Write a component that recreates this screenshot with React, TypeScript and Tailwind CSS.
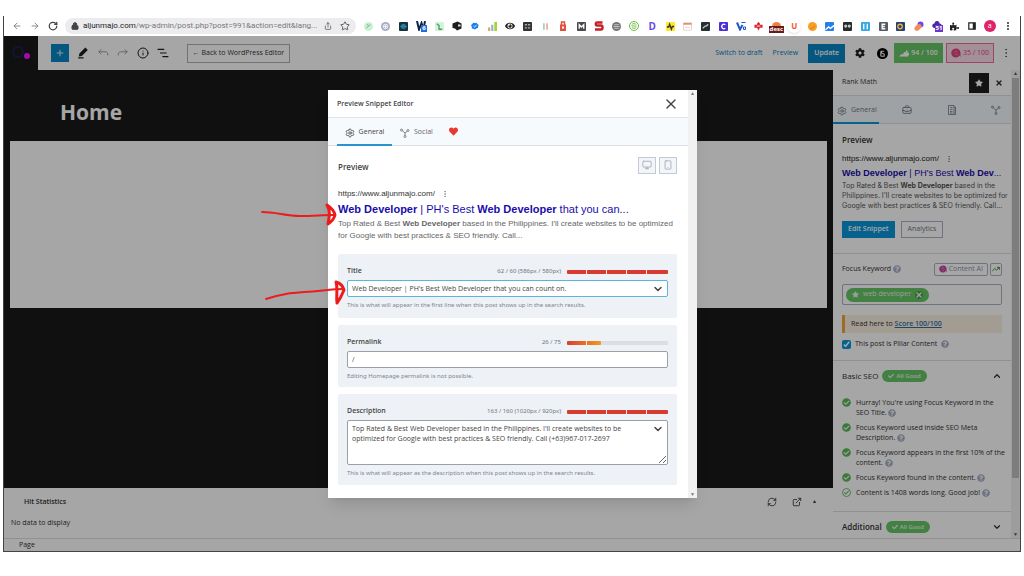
import type { ReactNode } from 'react';
import { ArrowLeft, ArrowRight, BriefcaseBusiness, ChevronDown, ChevronUp, ExternalLink, Info, Lock, Monitor, MoreVertical, Plus, RefreshCw, RotateCw, Settings, Share, Smartphone, Star, TrendingUp, X } from 'lucide-react';
import { FaCheck, FaCheckCircle, FaCog, FaEye, FaHeart, FaPuzzlePiece, FaQuestionCircle, FaRegCheckCircle, FaStar } from 'react-icons/fa';

const SocialIcon = ({ className }: { className: string }) => (
    <svg viewBox="0 0 20 20" fill="none" stroke="currentColor" strokeWidth="1.6" className={className}>
        <circle cx="3" cy="4" r="2" />
        <circle cx="16" cy="5" r="2" />
        <circle cx="10" cy="17" r="2" />
        <path d="M4.5 5.5 10 10v5M10 10l4.5-3.5" />
    </svg>
);

const SchemaIcon = ({ className }: { className: string }) => (
    <svg viewBox="0 0 20 20" fill="none" stroke="currentColor" strokeWidth="1.6" className={className}>
        <path d="M3 1h11v18H3ZM14 4h3v15h-3M6 5h5M6 9h5M6 13h5M6 16h5" />
    </svg>
);

const AiIcon = ({ className }: { className: string }) => (
    <svg viewBox="0 0 20 20" className={className}>
        <path d="M10 1a9 9 0 1 0 7 14l2 3V10a9 9 0 0 0-9-9Z" fill="currentColor" />
        <path d="M6 9c2-4 6-3 7-1M7 12c2 2 5 2 7 0M9 10h3" stroke="#fff" strokeOpacity=".5" strokeWidth="1.2" fill="none" />
    </svg>
);

const ScoreIcon = () => (
    <svg viewBox="0 0 20 14" fill="currentColor" className="h-[7px] w-2.5">
        <path d="M0 13 5 8l3 1 2-5 3 1 2-5 2 1v12Z" />
        <path d="M14 13V7l6-2v5l-3 3Z" />
    </svg>
);

const HistoryArrow = ({ className }: { className: string }) => (
    <svg viewBox="0 0 20 20" fill="none" stroke="currentColor" strokeWidth="1.6" className={className}>
        <path d="M7 4 3 8l4 4M3 8h11c3 0 4 2 4 6" />
    </svg>
);

const Help = () => <FaQuestionCircle className="inline-block size-2 text-[#a9b1c4]" />;

// Browser extension badges, in toolbar order
const Tile = ({ bg, fg = '#fff', children }: { bg: string; fg?: string; children?: ReactNode }) => (
    <svg viewBox="0 0 20 20" className="size-[9px]">
        <rect width="20" height="20" rx="2" fill={bg} />
        <g stroke={fg} strokeWidth="3" fill="none">{children}</g>
    </svg>
);

const Round = ({ bg, fg = '#fff', children }: { bg: string; fg?: string; children?: ReactNode }) => (
    <svg viewBox="0 0 20 20" className="size-[9px]">
        <circle cx="10" cy="10" r="10" fill={bg} />
        <g stroke={fg} strokeWidth="2" fill="none">{children}</g>
    </svg>
);

const Letter = ({ className, children }: { className: string; children: ReactNode }) => (
    <span className={`flex size-[10px] items-center justify-center font-bold ${className}`}>{children}</span>
);

const Badge = ({ className, children }: { className: string; children: ReactNode }) => (
    <span className={`absolute top-1 px-px text-[6px] leading-[7px] font-bold text-white ${className}`}>{children}</span>
);

const extensions: ReactNode[] = [
    <Round bg="#c9f0d2" fg="#5fb878"><path d="M5 14 14 5M7 5l3 4" /></Round>,
    <Round bg="#a5adc4"><circle cx="10" cy="10" r="5" /><path d="M10 7v6M7 10h6" /></Round>,
    <Tile bg="#16323f" fg="#2889ab"><circle cx="10" cy="10" r="4" /><path d="M3 10h14" /></Tile>,
    <><svg viewBox="0 0 20 20" className="size-[10px]"><path d="m2 0 4 17 5-13 4 13 3-17" fill="none" stroke="#17233f" strokeWidth="4" /></svg><Badge className="left-1.5 bg-[#1a6fe0]">6</Badge></>,
    <Tile bg="#d6f2dc" fg="#4d9e64"><path d="m4 4 5 4v8h7" /></Tile>,
    <svg viewBox="0 0 20 20" className="size-[10px]"><path d="M1 5 11 1l8 4v10l-9 4-4-4-5-1Z" fill="#1c1c1c" /><path d="M12 7h5v4h-5z" fill="#ddd" /></svg>,
    <svg viewBox="0 0 20 20" className="size-2"><path d="m7 1 3 2 4-1 2 3 3 2-1 4-1 4-4 1-3 3-4-2-4-1v-4l-2-4 3-3Z" fill="#1a7ff0" /><path d="m6 10 3 3 5-6" stroke="#fff" strokeWidth="2" fill="none" /></svg>,
    <svg viewBox="0 0 20 20" className="size-[9px]"><path d="M0 12h5v8H0z" fill="#e7a55f" /><path d="M7 6h5v14H7z" fill="#8fb6d8" /><path d="M14 0h6v20h-6z" fill="#a8d52c" /></svg>,
    <FaEye className="size-[10px] text-[#222]" />,
    <Tile bg="#333" fg="#aaa"><path d="M4 6h5M11 6h5M4 13h5M11 13h5" /></Tile>,
    <svg viewBox="0 0 20 20" className="size-[9px]"><path d="M5 3h3v14H5z" fill="#7cc9a5" /><path d="M12 3h3v14h-3z" fill="#f48d80" /></svg>,
    <svg viewBox="0 0 20 20" className="size-[10px]"><path d="M4 7h12v13H4z" fill="#e0523c" /><path d="M7 8V2h6v6" stroke="#e0523c" strokeWidth="3" fill="none" /><path d="M8 11h4v4H8z" fill="#fff" /></svg>,
    <Tile bg="#48494d"><path d="M5 15V6l5 5 5-5v9" /></Tile>,
    <svg viewBox="0 0 20 20" className="size-[10px]"><path d="M17 3H6C3 3 3 9 6 9h8c4 0 4 8 0 8H2" fill="none" stroke="#c3222a" strokeWidth="5" /></svg>,
    <Round bg="#777"><path d="M3 10h14M5 6h10M5 14h10" strokeOpacity=".6" /></Round>,
    <svg viewBox="0 0 20 20" className="size-[10px]"><circle cx="10" cy="10" r="9" fill="none" stroke="#6cbb45" strokeWidth="2" /><path d="M5 8a6 6 0 0 1 10 0M15 12a6 6 0 0 1-10 0M6 10h8" fill="none" stroke="#6cbb45" strokeWidth="2" /></svg>,
    <Letter className="text-[10px] text-[#6a4be8]">D</Letter>,
    <Tile bg="#ffe923" fg="#333"><path d="M2 11h4l2-6 4 11 2-6h4" /></Tile>,
    <svg viewBox="0 0 20 20" className="size-[9px]"><path d="M1 2h18v16H1z" fill="#fff" stroke="#e5cfc8" strokeWidth="2" /><path d="M1 4h18" stroke="#e88a74" strokeWidth="4" /><path d="M4 12h12" stroke="#e5cfc8" strokeWidth="2" /></svg>,
    <Tile bg="#263032"><path d="m4 14 5-5h3l4-4" strokeOpacity=".7" /></Tile>,
    <Tile bg="#4c2fd6"><path d="M14 6a5 5 0 1 0 0 8" /></Tile>,
    <svg viewBox="0 0 20 20" className="size-[10px]"><path d="m2 3 6 14 5-9" fill="none" stroke="#2158cc" strokeWidth="4" /><path d="M11 3h8M15 12h4v5h-4z" stroke="#2158cc" strokeWidth="2" fill="none" /></svg>,
    <svg viewBox="0 0 20 20" className="size-[9px]"><path d="M7 3l3-3 3 3v3h6v7h-6l-3 6-3-6H1V6h6Z" fill="#d8202f" /><path d="M6 9h8" stroke="#fff" strokeWidth="2" /></svg>,
    <><Round bg="#ee8140" /><Badge className="-left-0.5 bg-[#6b1a1a]">desc</Badge></>,
    <span className="flex size-3.5 shrink-0 items-center justify-center rounded-full text-[8px] font-bold text-[#ef5a35] shadow">U</span>,
    <Round bg="#f6a021" fg="#e56a3c"><path d="M5 14c4 2 9-1 9-6" /></Round>,
    <Tile bg="#2680e8"><path d="m1 17 7-6 4 3 8-6" /></Tile>,
    <Tile bg="#242c2c" fg="#ccc"><circle cx="6" cy="9" r="2" /><circle cx="14" cy="9" r="2" /></Tile>,
    <Tile bg="#35a8e8"><path d="M6 4v12M14 4v12" /></Tile>,
    <Tile bg="#555b60"><path d="M14 5H7v10h7M7 10h6" /></Tile>,
    <Tile bg="#253f78" fg="#f2b134"><circle cx="9" cy="10" r="5" /></Tile>,
    <svg viewBox="0 0 20 20" className="size-[10px]"><circle cx="13" cy="7" r="6" fill="#6a4be8" /><ellipse cx="8" cy="13" rx="8" ry="5" fill="#f58a5b" transform="rotate(-40 8 13)" /></svg>,
    <><svg viewBox="0 0 20 20" className="size-[10px]"><path d="M10 0c4 0 5 3 5 5 6 0 6 9 0 9H5c-6 0-6-9 0-9 0-2 1-5 5-5Z" fill="#4a2a9b" /></svg><Badge className="left-1 bg-[#6b35c9]">51</Badge></>,
    <FaPuzzlePiece className="size-[9px] text-[#222]" />,
    <svg viewBox="0 0 20 20" className="size-2"><path d="M2 2h16v16H2z" fill="none" stroke="#222" strokeWidth="3" /><path d="M12 2h6v16h-6z" fill="#222" /></svg>,
    <span className="flex size-3 items-center justify-center rounded-full bg-[#e0246c] text-[7px] text-white">a</span>,
    <MoreVertical className="size-2.5 text-[#333]" strokeWidth={3} />,
];

const BrowserBar = () => (
    <div className="flex h-5 shrink-0 items-center bg-white text-[#444]">
        <div className="flex w-[61px] shrink-0 items-center gap-2 pl-2">
            <ArrowLeft className="size-[10px] text-[#777]" />
            <ArrowRight className="size-[10px] text-[#777]" />
            <RotateCw className="size-[10px]" strokeWidth={3} />
        </div>
        <div className="flex h-4 w-[291px] shrink-0 items-center rounded-full bg-[#ececee] px-1.5">
            <Lock className="mr-1 size-2" fill="currentColor" strokeWidth={3} />
            <span className="flex-1 font-[Roboto,sans-serif] text-[8px] whitespace-nowrap text-[#777]"><span className="text-[#222]">aljunmajo.com</span>/wp-admin/post.php?post=991&amp;action=edit&amp;lang...</span>
            <Share className="mr-2 size-2" />
            <Star className="size-[10px]" />
        </div>
        <div className="flex flex-1 items-center justify-between pr-1.5 pl-1.5">
            {extensions.map((icon, i) => (
                <span key={i} className="relative flex w-3 justify-center">{icon}</span>
            ))}
        </div>
    </div>
);

const EditorHeader = () => (
    <header className="flex h-[34px] shrink-0 items-center bg-white text-[#1e1e1e]">
        <a href="#dashboard" aria-label="Dashboard" className="flex h-full w-[34px] items-center justify-center bg-[#1a1a1a]">
            <svg viewBox="0 0 20 14" className="h-[14px] w-5">
                <circle cx="7" cy="6" r="5" fill="none" stroke="#17264f" strokeWidth="2" />
                <circle cx="16" cy="10" r="3" fill="#ff10ff" />
            </svg>
        </a>
        <div className="flex items-center gap-2 pl-[13px]">
            <button aria-label="Add block" className="flex size-[18px] items-center justify-center bg-[#0a86c4] text-white"><Plus className="size-[10px]" /></button>
            <button aria-label="Tools">
                <svg viewBox="0 0 20 20" className="size-3" fill="currentColor"><path d="m14 1 4 4-10 10-5 1 1-5ZM2 17h9v2H2z" /></svg>
            </button>
            <button aria-label="Undo"><HistoryArrow className="size-3 text-[#999]" /></button>
            <button aria-label="Redo"><HistoryArrow className="size-3 -scale-x-100 text-[#999]" /></button>
            <button aria-label="Details"><Info className="size-3" /></button>
            <button aria-label="List view">
                <svg viewBox="0 0 20 20" className="size-3" stroke="currentColor" strokeWidth="2"><path d="M1 4h11M5 10h11M9 16h10" /></svg>
            </button>
        </div>
        <button className="ml-[18px] h-[19px] w-[103px] border border-[#b0b0b0] text-[7px] whitespace-nowrap text-[#333]">← Back to WordPress Editor</button>
        <div className="ml-auto flex items-center pr-2 text-[7px] whitespace-nowrap">
            <button className="mr-2.5 text-[#0a7cba]">Switch to draft</button>
            <button className="mr-2.5 text-[#0a7cba]">Preview</button>
            <button className="mr-2.5 h-[19px] bg-[#0a86c4] px-1.5 font-semibold text-white">Update</button>
            <button aria-label="Settings" className="mr-3"><FaCog className="size-[10px]" /></button>
            <button aria-label="Theme" className="mr-1.5">
                <svg viewBox="0 0 20 20" className="size-[11px]"><circle cx="10" cy="10" r="10" fill="#000" /><path d="M13 6H8v3l5 2v4H7M7 6v9" fill="none" stroke="#fff" strokeWidth="2" /></svg>
            </button>
            <button className="mr-[3px] flex h-5 w-[49px] items-center justify-center gap-0.5 bg-[#66c666] font-semibold text-white"><ScoreIcon />94 / 100</button>
            <button className="flex h-5 w-12 items-center justify-center gap-0.5 border border-[#f06a9c] bg-[#fbdce8] text-[#e0447c]"><AiIcon className="size-2.5" />35 / 100</button>
            <MoreVertical className="ml-1.5 size-3" strokeWidth={1} />
        </div>
    </header>
);

const AllGood = () => (
    <span className="flex h-3 items-center gap-0.5 rounded-full bg-[#66c666] px-1.5 text-[6px] font-semibold text-[#e8f5e8]"><FaCheck />All Good</span>
);

const checks = [
    { text: "Hurray! You're using Focus Keyword in the SEO Title.", done: true },
    { text: 'Focus Keyword used inside SEO Meta Description.', done: true },
    { text: 'Focus Keyword appears in the first 10% of the content.', done: true },
    { text: 'Focus Keyword found in the content.', done: true },
    { text: 'Content is 1408 words long. Good job!', done: false },
];

const Sidebar = () => (
    <aside className="flex w-[187px] shrink-0 bg-white text-[7px] text-[#333]">
        <div className="min-w-0 flex-1">
            <div className="flex h-[26px] items-center border-b border-[#ddd] pr-2 pl-[9px]">
                <h2 className="flex-1 font-medium">Rank Math</h2>
                <button aria-label="Unpin" className="mr-1.5 flex size-5 items-center justify-center bg-[#1e1e1e] text-white"><FaStar className="size-2" /></button>
                <button aria-label="Close settings"><X className="size-2" strokeWidth={4} /></button>
            </div>
            <div className="flex h-7 items-center border-b border-[#ddd] bg-[#f5f9fd] text-[#6f7580]">
                <button className="flex h-7 w-[46px] items-center gap-1 border-b-2 border-[#0a96d8] pt-1 pl-1"><Settings className="size-2.5" strokeWidth={2} />General</button>
                <div className="flex flex-1 items-center justify-between pr-2.5 pl-[23px]">
                    <button aria-label="Advanced"><BriefcaseBusiness className="size-2.5" /></button>
                    <button aria-label="Schema"><SchemaIcon className="size-2.5" /></button>
                    <button aria-label="Social"><SocialIcon className="size-2.5" /></button>
                </div>
            </div>
            <section className="h-[130px] border-b border-[#ddd] px-[9px] pt-2.5">
                <h3 className="mb-[7px] text-[8px] leading-3 font-semibold">Preview</h3>
                <div className="font-['Liberation_Sans',sans-serif] whitespace-nowrap">
                    <div className="flex items-center gap-1.5 text-[8px] leading-3 text-[#222]">https://www.aljunmajo.com/<MoreVertical className="size-2 text-[#777]" /></div>
                    <div className="text-[9px] leading-4 text-[#1a0dab]"><b>Web Developer</b> | PH's Best <b>Web Dev</b>...</div>
                    <p className="font-[Inter,sans-serif] text-[7px] leading-[10px] text-[#555]">Top Rated &amp; Best <b>Web Developer</b> based in the<br />Philippines. I'll create websites to be optimized for<br />Google with best practices &amp; SEO friendly. Call...</p>
                </div>
                <div className="mt-2.5 flex gap-1.5">
                    <button className="h-[17px] bg-[#0a96d8] px-1.5 font-semibold text-white">Edit Snippet</button>
                    <button className="h-[17px] border border-[#a9b1c4] px-1.5 text-[#6f7580]">Analytics</button>
                </div>
            </section>
            <section className="h-[107px] border-b border-[#ddd] px-[9px] pt-2">
                <div className="flex h-[14px] items-center gap-0.5">
                    <label htmlFor="keyword" className="font-medium">Focus Keyword</label><Help />
                    <button className="ml-auto flex h-[13px] items-center gap-0.5 rounded-xs border border-[#a9b1c4] px-1 text-[#8d93a8]"><AiIcon className="size-2 text-[#c34ba0]" />Content AI</button>
                    <button aria-label="Trends" className="flex h-[13px] w-3 items-center justify-center rounded-xs border border-[#a9b1c4]"><TrendingUp className="size-2 text-[#3a8f3a]" strokeWidth={3} /></button>
                </div>
                <div className="mt-2 flex h-[21px] items-center rounded-xs border border-[#a9b1c4] px-[3px]">
                    <span className="flex h-[14px] items-center gap-1 rounded-full bg-[#66c666] px-1.5 text-[#e8f5e8]"><FaStar className="size-[7px]" />web developer<button aria-label="Remove keyword" className="rounded-full bg-[#4f9f4f]"><X className="size-2" strokeWidth={4} /></button></span>
                    <input id="keyword" className="min-w-0 flex-1" />
                </div>
                <div className="mt-2.5 border-l-[3px] border-[#f0a63c] bg-[#fbf0e0] pl-1.5 leading-[18px]">Read here to <a href="#score" className="font-semibold text-[#2f6fa5] underline">Score 100/100</a></div>
                <label className="mt-1.5 flex items-center gap-1 font-medium">
                    <input type="checkbox" defaultChecked className="size-[9px] accent-[#0a96d8]" />
                    This post is Pillar Content <Help />
                </label>
            </section>
            <section className="h-[151px] border-b border-[#ddd] px-[9px] pt-[9px]">
                <div className="mb-4 flex h-3 items-center gap-1 text-[8px] font-medium">Basic SEO<AllGood /><button aria-label="Collapse Basic SEO" className="ml-auto"><ChevronUp className="size-2.5" strokeWidth={3} /></button></div>
                <ul className="-mr-1.5">
                    {checks.map(({ text, done }) => (
                        <li key={text} className="mb-[5px] flex gap-[5px] leading-[10px]">
                            {done ? <FaCheckCircle className="size-[9px] shrink-0 text-[#5cb85c]" /> : <FaRegCheckCircle className="size-[9px] shrink-0 text-[#5cb85c]" />}
                            <span>{text} <Help /></span>
                        </li>
                    ))}
                </ul>
            </section>
            <div className="flex h-[26px] items-center gap-1 px-[9px] pt-1 text-[8px] font-semibold">Additional<AllGood /><button aria-label="Expand Additional" className="ml-auto"><ChevronDown className="size-2.5" strokeWidth={3} /></button></div>
        </div>
        <div className="flex w-[9px] flex-col items-center justify-between bg-[#f1f1f1] text-[5px] text-[#555]">
            <span>▲</span>
            <span className="mb-[53px] w-[7px] flex-1 bg-[#c1c1c1]" />
            <span>▼</span>
        </div>
    </aside>
);

const Canvas = () => (
    <main className="flex min-w-0 flex-1 flex-col">
        <div className="flex-1 bg-[#1a1a1a] px-1.5">
            <h1 className="px-[50px] pt-[27px] pb-[14px] text-[21px] leading-[30px] font-bold text-white">Home</h1>
            <div className="h-[167px] bg-white" />
        </div>
        <section className="h-[50px] shrink-0 bg-white text-[7px] text-[#333]">
            <div className="flex h-[27px] items-center pr-4 pl-5">
                <h2 className="flex-1 pt-0.5 font-semibold">Hit Statistics</h2>
                <button aria-label="Refresh"><RefreshCw className="size-2.5" /></button>
                <button aria-label="Open" className="ml-[15px]"><ExternalLink className="size-2.5" /></button>
                <button aria-label="Collapse" className="ml-2.5 text-[5px]">▲</button>
            </div>
            <p className="px-[7px] leading-4">No data to display</p>
        </section>
    </main>
);

const Meter = ({ value, id, from, to }: { value: number; id: string; from: string; to: string }) => (
    <svg viewBox="0 0 101 4" className="ml-1.5 h-1 w-[101px] shrink-0">
        <linearGradient id={`${id}-fill`}>
            <stop offset="0" stopColor={from} />
            <stop offset="1" stopColor={to} />
        </linearGradient>
        <rect width="101" height="4" rx="1" fill="#dddee2" />
        <rect width={value} height="4" rx="1" fill={`url(#${id}-fill)`} />
        {[19, 39, 59, 79].filter(x => x < value).map(x => (
            <rect key={x} x={x} width="1" height="4" fill="#eef1f5" />
        ))}
    </svg>
);

type FieldProps = { id: string; label: string; count: string; hint: string; meter: ReactNode; className: string; children: ReactNode };

const Field = ({ id, label, count, hint, meter, className, children }: FieldProps) => (
    <div className={`mt-[7px] rounded-xs bg-[#eef1f5] px-[9px] pt-3 ${className}`}>
        <div className="mb-[3px] flex h-[11px] items-center">
            <label htmlFor={id} className="flex-1 font-semibold text-[#444]">{label}</label>
            <span className="font-['Noto_Sans',sans-serif] text-[6px] text-[#6f767d]">{count}</span>
            {meter}
        </div>
        <div className="relative flex">
            {children}
        </div>
        <p className="mt-[3px] font-['Noto_Sans',sans-serif] text-[6px] leading-[10px] text-[#7f868d]">{hint}</p>
    </div>
);

const Expand = () => (
    <button aria-label="Insert variable" className="absolute top-0 right-1 flex h-[17px] items-center"><ChevronDown className="size-3 text-[#444]" strokeWidth={3} /></button>
);

const SnippetModal = () => (
    <div role="dialog" aria-label="Preview Snippet Editor" className="relative flex w-[369px] bg-white text-[7px] text-[#444] shadow-lg">
        <div className="min-w-0 flex-1">
            <div className="flex h-7 items-center justify-between border-b border-[#e2e4e7] pr-[9px] pl-[9px]">
                <h2 className="pt-0.5 font-semibold">Preview Snippet Editor</h2>
                <button aria-label="Close"><X className="size-4" strokeWidth={2} /></button>
            </div>
            <div className="flex h-7 items-center border-b border-[#dadfe4] bg-[#f7fafd] px-[9px] text-[#666]">
                <button className="flex h-7 w-[55px] items-center justify-center gap-1 border-b-2 border-[#2a94cc] pt-1 text-[#444]"><Settings className="size-2.5" strokeWidth={2} />General</button>
                <button className="ml-2 flex items-center gap-1 pt-0.5"><SocialIcon className="size-2.5" />Social</button>
                <button aria-label="Favourites" className="ml-4"><FaHeart className="size-[9px] text-[#e8382f]" /></button>
            </div>
            <div className="pt-2.5 pr-[11px] pb-[13px] pl-2.5">
                <div className="flex h-[18px] items-center gap-[3px]">
                    <h3 className="flex-1 pt-1 text-[8px] font-semibold">Preview</h3>
                    <button aria-label="Desktop" className="flex h-[17px] w-[18px] items-center justify-center border border-[#c3cad6] bg-[#f3f5f8] text-[#a0a8b6]"><Monitor className="size-2.5" /></button>
                    <button aria-label="Mobile" className="flex h-[17px] w-[18px] items-center justify-center border border-[#c3cad6] bg-[#f3f5f8] text-[#a0a8b6]"><Smartphone className="size-2.5" /></button>
                </div>
                <div className="mt-3.5 mb-3 font-['Liberation_Sans',sans-serif] whitespace-nowrap">
                    <div className="flex items-center gap-1.5 text-[8px] leading-3 text-[#333]">https://www.aljunmajo.com/<MoreVertical className="size-2 text-[#777]" /></div>
                    <div className="text-[11px] leading-[18px] text-[#1a0dab]"><b>Web Developer</b> | PH's Best <b>Web Developer</b> that you can...</div>
                    <p className="text-[8px] leading-3 text-[#666]">Top Rated &amp; Best <b>Web Developer</b> based in the Philippines. I'll create websites to be optimized<br />for Google with best practices &amp; SEO friendly. Call...</p>
                </div>
                <Field id="title" label="Title" count="62 / 60 (586px / 580px)" className="h-16" hint="This is what will appear in the first line when this post shows up in the search results." meter={<Meter id="title" value={101} from="#d63d30" to="#d63d30" />}>
                    <input id="title" defaultValue="Web Developer | PH's Best Web Developer that you can count on." className="h-[17px] w-full rounded-xs border border-[#5ab4dc] bg-white px-1" />
                    <Expand />
                </Field>
                <Field id="permalink" label="Permalink" count="26 / 75" className="h-[62px]" hint="Editing Homepage permalink is not possible." meter={<Meter id="permalink" value={34} from="#d9402f" to="#ee9a22" />}>
                    <input id="permalink" defaultValue="/" className="h-[17px] w-full rounded-xs border border-[#9aa0a8] bg-white px-1" />
                </Field>
                <Field id="description" label="Description" count="163 / 160 (1020px / 920px)" className="h-[91px]" hint="This is what will appear as the description when this post shows up in the search results." meter={<Meter id="description" value={101} from="#d63d30" to="#d63d30" />}>
                    <textarea id="description" defaultValue="Top Rated & Best Web Developer based in the Philippines. I'll create websites to be optimized for Google with best practices & SEO friendly. Call (+63)967-017-2697" className="h-[45px] w-full rounded-xs border border-[#9aa0a8] bg-white py-[3px] pr-10 pl-1 leading-[10px]" />
                    <Expand />
                </Field>
            </div>
        </div>
        <div className="flex w-[9px] flex-col items-center justify-between bg-[#f1f1f1] text-[5px] text-[#777]">
            <span>▲</span>
            <span>▼</span>
        </div>
        <svg viewBox="0 0 90 220" fill="none" stroke="#ec1c1c" strokeWidth="2" strokeLinecap="round" strokeLinejoin="round" className="pointer-events-none absolute top-0 -left-[68px] h-[220px] w-[90px]">
            <path d="M2 122c14 0 24 4 38 4s22-1 34-1" />
            <path d="M6 209c20-7 32-6 52-8 10-1 18-2 26-2" />
            <path d="M67 115c3 2 7 5 8 10-1 4-4 7-7 9 1-6 3-12-1-19" strokeWidth="3" />
            <path d="M76 192c4 1 7 4 8 8-2 5-4 9-7 13-1-8 1-14-1-21" strokeWidth="3" />
        </svg>
    </div>
);

export default function App() {
    return (
        <div className="flex min-h-screen flex-col bg-white pt-4 pr-[3px] pb-6 pl-[3px] font-['Open_Sans','Noto_Sans',sans-serif]">
            <div className="flex flex-1 flex-col border-x border-b border-[#444]">
                <BrowserBar />
                <div className="relative flex flex-1 flex-col">
                    <EditorHeader />
                    <div className="flex flex-1">
                        <Canvas />
                        <Sidebar />
                    </div>
                    <footer className="h-[13px] shrink-0 border-t border-[#ddd] bg-white px-[15px] text-[7px] leading-3 text-[#333]">Page</footer>
                    <div className="absolute inset-0 flex items-start justify-center bg-black/35 pt-[54px] pl-px">
                        <SnippetModal />
                    </div>
                </div>
            </div>
        </div>
    );
}
